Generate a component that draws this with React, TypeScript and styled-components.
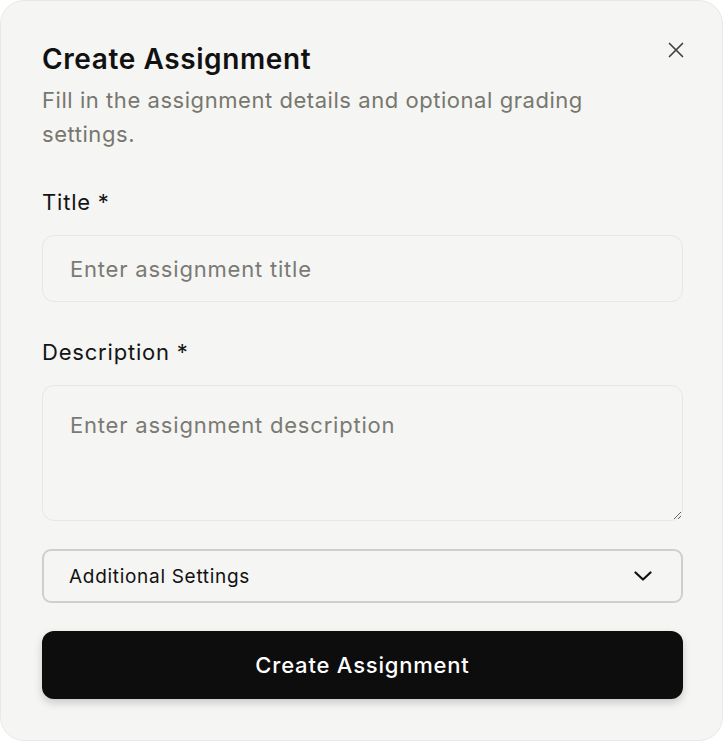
import React from "react";
import styled, { createGlobalStyle } from "styled-components";

const GlobalStyle = createGlobalStyle`
  html, body {
    margin: 0;
    padding: 0;
    background: #ffffff;
  }
  body {
    font-family: Inter, "Noto Sans", sans-serif;
    -webkit-font-smoothing: antialiased;
  }
  * {
    box-sizing: border-box;
  }
`;

const Dialog = styled.div`
  position: relative;
  width: 723px;
  height: 741px;
  background: #f5f5f3;
  border: 1px solid #e8e8e6;
  border-radius: 24px;
  padding: 40px 39px 0 41px;
  display: flex;
  flex-direction: column;
`;

const Header = styled.div`
  display: flex;
  flex-direction: column;
  gap: 6px;
  margin-bottom: 37px;
`;

const Title = styled.h2`
  margin: 0;
  font-size: 28px;
  font-weight: 600;
  line-height: 36px;
  color: #111111;
  letter-spacing: 0.6px;
`;

const Subtitle = styled.p`
  margin: 0;
  font-size: 22px;
  line-height: 34px;
  color: #77776f;
  letter-spacing: 0.55px;
  max-width: 580px;
`;

const CloseButton = styled.button`
  position: absolute;
  top: 38px;
  right: 35px;
  width: 22px;
  height: 22px;
  padding: 0;
  border: none;
  background: transparent;
  color: #444444;
  display: flex;
  align-items: center;
  justify-content: center;
  cursor: pointer;
`;

const Field = styled.div<{ $spacing: number }>`
  display: flex;
  flex-direction: column;
  gap: 19px;
  margin-bottom: ${(p) => p.$spacing}px;
`;

const Label = styled.label`
  font-size: 22px;
  line-height: 28px;
  color: #141414;
  letter-spacing: 0.8px;
`;

const TextInput = styled.input`
  width: 100%;
  height: 67px;
  padding: 0 27px;
  border: 1px solid #e6e6e3;
  border-radius: 12px;
  background: #f5f5f3;
  font-family: inherit;
  font-size: 22px;
  letter-spacing: 0.8px;
  color: #111;
  outline: none;
  &::placeholder {
    color: #7a7a74;
  }
`;

const TextArea = styled.textarea`
  width: 100%;
  height: 136px;
  padding: 25px 27px;
  border: 1px solid #e6e6e3;
  border-radius: 12px;
  background: #f5f5f3;
  font-family: inherit;
  font-size: 22px;
  line-height: 28px;
  letter-spacing: 0.8px;
  color: #111;
  outline: none;
  resize: vertical;
  &::placeholder {
    color: #7a7a74;
  }
`;

const SettingsToggle = styled.button`
  width: 100%;
  height: 54px;
  padding: 0 29px 0 25px;
  border: 2px solid #cfcfcd;
  border-radius: 9px;
  background: #f5f5f3;
  display: flex;
  align-items: center;
  justify-content: space-between;
  font-family: inherit;
  font-size: 19px;
  letter-spacing: 0.7px;
  color: #111;
  cursor: pointer;
`;

const SubmitButton = styled.button`
  width: 100%;
  height: 68px;
  margin-top: 28px;
  border: none;
  border-radius: 12px;
  background: #0d0d0d;
  color: #ffffff;
  font-family: inherit;
  font-size: 22px;
  font-weight: 500;
  letter-spacing: 0.8px;
  box-shadow: 0 4px 8px rgba(0, 0, 0, 0.18);
  cursor: pointer;
`;

const CloseIcon = () => (
  <svg width="16" height="16" viewBox="0 0 16 16" fill="none" stroke="currentColor" strokeWidth="1.7" strokeLinecap="round">
    <path d="M1.5 1.5 14.5 14.5" />
    <path d="M14.5 1.5 1.5 14.5" />
  </svg>
);

const ChevronDown = () => (
  <svg width="18" height="10" viewBox="0 0 18 10" fill="none" stroke="#111" strokeWidth="2.2" strokeLinecap="round" strokeLinejoin="round">
    <path d="M1.5 1.5 9 8.5 16.5 1.5" />
  </svg>
);

const App = () => {
  return (
    <>
      <GlobalStyle />
      <Dialog>
        <CloseButton aria-label="Close">
          <CloseIcon />
        </CloseButton>
        <Header>
          <Title>Create Assignment</Title>
          <Subtitle>
            Fill in the assignment details and optional grading settings.
          </Subtitle>
        </Header>
        <Field $spacing={36}>
          <Label>Title *</Label>
          <TextInput placeholder="Enter assignment title" />
        </Field>
        <Field $spacing={28}>
          <Label>Description *</Label>
          <TextArea placeholder="Enter assignment description" />
        </Field>
        <SettingsToggle>
          <span>Additional Settings</span>
          <ChevronDown />
        </SettingsToggle>
        <SubmitButton>Create Assignment</SubmitButton>
      </Dialog>
    </>
  );
};

export default App;
